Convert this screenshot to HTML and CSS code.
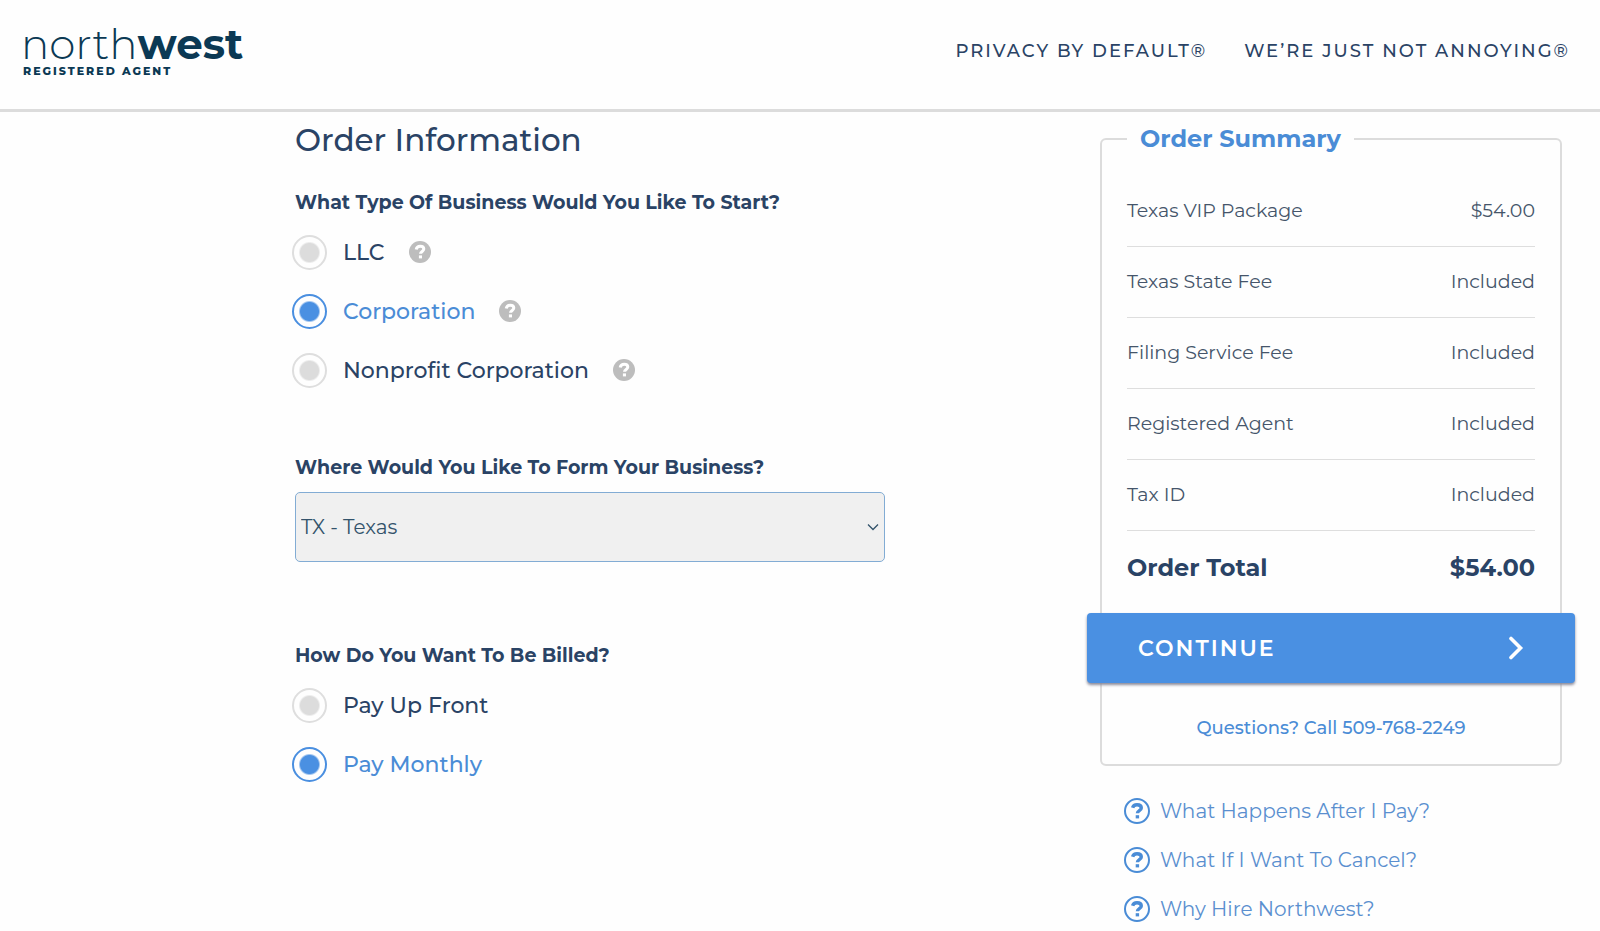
FILE: index.html
```html
<!DOCTYPE html>
<html lang="en">
<head>
<meta charset="utf-8">
<meta name="viewport" content="width=device-width, initial-scale=1">
<title>Order Information</title>
<link rel="stylesheet" href="styles.css">
</head>
<body>
<svg class="sprite" aria-hidden="true">
  <symbol id="help-solid" viewBox="0 0 22 22">
    <circle cx="11" cy="11" r="11" fill="#bdbdbd"/>
    <path d="M7.2 8.600C7.600 6.300 9.200 5.200 11.200 5.200c2.100 0 3.600 1.200 3.600 2.900 0 2.300-3.300 2.400-3.300 4.700" fill="none" stroke="#fff" stroke-width="3"/>
    <path d="M9.900 14.400h3.100v3H9.900z" fill="#fff"/>
  </symbol>
  <symbol id="help-outline" viewBox="0 0 26 26">
    <circle cx="13" cy="13" r="12" fill="none" stroke="currentColor" stroke-width="2"/>
    <path d="M8.600 9.800C9.200 7.600 10.900 6.700 13 6.700c2.500 0 4.300 1.200 4.300 3.200 0 2.800-3.900 2.600-3.900 5.300" fill="none" stroke="currentColor" stroke-width="3.400"/>
    <path d="M11.700 17.200h3.400v3.200h-3.400z" fill="currentColor"/>
  </symbol>
</svg>

<header class="header">
  <a class="logo" href="#">
    <span class="logo-name"><span class="logo-light">north</span><span class="logo-bold">west</span></span>
    <span class="logo-tag">REGISTERED AGENT</span>
  </a>
  <nav class="nav">
    <a href="#">PRIVACY BY DEFAULT®</a>
    <a href="#">WE’RE JUST NOT ANNOYING®</a>
  </nav>
</header>

<main class="page">
  <form class="order" id="order">
    <h1 class="title">Order Information</h1>

    <section class="group" role="radiogroup" aria-labelledby="q-type">
      <h2 class="question" id="q-type">What Type Of Business Would You Like To Start?</h2>
      <div class="option">
        <input type="radio" name="type" id="type-llc"><label for="type-llc">LLC</label>
        <button class="help" type="button" aria-label="About LLC"><svg><use href="#help-solid"/></svg></button>
      </div>
      <div class="option">
        <input type="radio" name="type" id="type-corp" checked><label for="type-corp">Corporation</label>
        <button class="help" type="button" aria-label="About Corporation"><svg><use href="#help-solid"/></svg></button>
      </div>
      <div class="option">
        <input type="radio" name="type" id="type-nonprofit"><label for="type-nonprofit">Nonprofit Corporation</label>
        <button class="help" type="button" aria-label="About Nonprofit Corporation"><svg><use href="#help-solid"/></svg></button>
      </div>
    </section>

    <section class="group group-state">
      <label class="question" for="state">Where Would You Like To Form Your Business?</label>
      <div class="select">
        <select id="state"><option>TX - Texas</option></select>
        <svg class="select-arrow" viewBox="0 0 12 8" aria-hidden="true"><path d="M1 1.500l5 5 5-5" fill="none" stroke="#33536b" stroke-width="1.300"/></svg>
      </div>
    </section>

    <section class="group" role="radiogroup" aria-labelledby="q-bill">
      <h2 class="question" id="q-bill">How Do You Want To Be Billed?</h2>
      <div class="option">
        <input type="radio" name="bill" id="bill-front"><label for="bill-front">Pay Up Front</label>
      </div>
      <div class="option">
        <input type="radio" name="bill" id="bill-month" checked><label for="bill-month">Pay Monthly</label>
      </div>
    </section>
  </form>

  <aside class="side">
    <fieldset class="summary">
      <legend>Order Summary</legend>
      <table class="lines">
        <tbody>
          <tr><th scope="row">Texas VIP Package</th><td>$54.00</td></tr>
          <tr><th scope="row">Texas State Fee</th><td>Included</td></tr>
          <tr><th scope="row">Filing Service Fee</th><td>Included</td></tr>
          <tr><th scope="row">Registered Agent</th><td>Included</td></tr>
          <tr><th scope="row">Tax ID</th><td>Included</td></tr>
        </tbody>
        <tfoot>
          <tr><th scope="row">Order Total</th><td>$54.00</td></tr>
        </tfoot>
      </table>
      <button class="continue" type="submit" form="order">
        <span>CONTINUE</span>
        <svg class="continue-arrow" viewBox="0 0 16 24" aria-hidden="true"><path d="M3 2.500l9.500 9.500L3 21.500" fill="none" stroke="#fff" stroke-width="3.600" stroke-linecap="round"/></svg>
      </button>
      <a class="call" href="tel:5097682249">Questions? Call 509-768-2249</a>
    </fieldset>
    <ul class="faq">
      <li><a href="#"><svg><use href="#help-outline"/></svg>What Happens After I Pay?</a></li>
      <li><a href="#"><svg><use href="#help-outline"/></svg>What If I Want To Cancel?</a></li>
      <li><a href="#"><svg><use href="#help-outline"/></svg>Why Hire Northwest?</a></li>
    </ul>
  </aside>
</main>
</body>
</html>
```
FILE: styles.css
```css
* {
  box-sizing: border-box;
}

body {
  margin: 0;
  background: #fefefe;
  color: #2a4365;
  font-family: Montserrat, Inter, "Liberation Sans", sans-serif;
}

a {
  color: inherit;
  text-decoration: none;
}

.sprite {
  display: none;
}

.header {
  display: flex;
  justify-content: space-between;
  align-items: center;
  height: 112px;
  padding: 0 30px 10px 21px;
  border-bottom: 3px solid #dcdcdc;
}

.logo {
  display: flex;
  flex-direction: column;
  color: #0b3954;
}

.logo-name {
  font-size: 42px;
  line-height: 42px;
}

.logo-light {
  font-weight: 300;
}

.logo-bold {
  font-weight: 700;
}

.logo-tag {
  padding-left: 2px;
  font-size: 11px;
  line-height: 12px;
  font-weight: 800;
  letter-spacing: 2px;
}

.nav {
  display: flex;
  gap: 37px;
  padding-top: 2px;
  font-size: 18px;
  font-weight: 500;
  letter-spacing: 2px;
}

.page {
  display: grid;
  grid-template-columns: 295fr 590fr 215fr 462fr 38fr;
  align-items: start;
}

.order {
  grid-column: 2;
  display: flex;
  flex-direction: column;
}

.title {
  margin: 8px 0 28px;
  font-size: 31px;
  line-height: 40px;
  font-weight: 500;
}

.group {
  margin-bottom: 48px;
}

.group-state {
  margin-bottom: 79px;
}

.question {
  display: block;
  margin: 0 0 10px;
  font-size: 19px;
  line-height: 30px;
  font-weight: 700;
}

.group-state .question {
  margin-bottom: 9px;
}

.option {
  display: flex;
  align-items: center;
  height: 48px;
  margin-bottom: 11px;
  margin-left: -3px;
  font-size: 22px;
  font-weight: 500;
}

.option input {
  appearance: none;
  flex: none;
  width: 35px;
  height: 35px;
  margin: 0 16px 0 0;
  border: 2px solid #dedede;
  border-radius: 50%;
  background: radial-gradient(circle, #dcdcdc 9px, transparent 11px);
}

.option input:checked {
  border-color: #4a8fe0;
  background: radial-gradient(circle, #4a90e2 9px, transparent 11px);
}

.option input:checked + label {
  color: #4a8cd6;
}

.help {
  width: 22px;
  height: 22px;
  margin-left: 24px;
  padding: 0;
  border: 0;
  background: none;
}

.help svg {
  display: block;
  width: 22px;
  height: 22px;
}

.select {
  position: relative;
}

.select select {
  appearance: none;
  display: block;
  width: 100%;
  height: 70px;
  padding: 0 5px;
  border: 1px solid #82acd4;
  border-radius: 5px;
  background: #f0f0f0;
  color: #33536b;
  font: inherit;
  font-size: 20px;
}

.select-arrow {
  position: absolute;
  right: 6px;
  top: 31px;
  width: 12px;
  height: 8px;
  pointer-events: none;
}

.side {
  grid-column: 4;
  padding-top: 12px;
}

.summary {
  min-width: 0;
  margin: 0;
  padding: 21px 25px 20px;
  border: 2px solid #dcdcdc;
  border-radius: 6px;
}

.summary legend {
  padding: 0 13px;
  color: #4a8cd6;
  font-size: 24px;
  line-height: 30px;
  font-weight: 700;
}

.lines {
  width: 100%;
  border-collapse: collapse;
  color: #45556a;
  font-size: 19px;
}

.lines th,
.lines td {
  height: 71px;
  padding: 0;
  border-bottom: 1px solid #dedede;
  font-weight: 400;
  text-align: left;
}

.lines td {
  text-align: right;
}

.lines tfoot th,
.lines tfoot td {
  height: 75px;
  border-bottom: 0;
  color: #2a4365;
  font-size: 24px;
  font-weight: 700;
}

.continue {
  display: flex;
  justify-content: space-between;
  align-items: center;
  width: calc(100% + 80px);
  height: 70px;
  margin: 8px -40px 29px;
  padding: 0 51px;
  border: 0;
  border-radius: 4px;
  background: #4a90e2;
  box-shadow: 0 2px 3px #8a8a9a;
  color: #fff;
  font: inherit;
  font-size: 22px;
  font-weight: 600;
  letter-spacing: 2px;
}

.continue-arrow {
  width: 16px;
  height: 24px;
}

.call {
  display: block;
  color: #4a8cd6;
  font-size: 18px;
  line-height: 32px;
  font-weight: 500;
  text-align: center;
}

.faq {
  display: flex;
  flex-direction: column;
  gap: 23px;
  margin: 32px 0 0;
  padding: 0 0 0 24px;
  list-style: none;
  color: #5a8fcf;
  font-size: 20px;
  line-height: 26px;
}

.faq a {
  display: flex;
  align-items: center;
  gap: 10px;
}

.faq svg {
  width: 26px;
  height: 26px;
  color: #4a8cd6;
}
```
